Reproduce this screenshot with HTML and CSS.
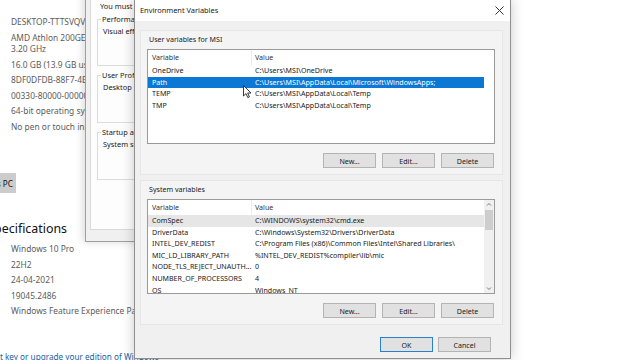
FILE: index.html
```html
<!DOCTYPE html>
<html lang="en">
<head>
  <meta charset="UTF-8">
  <title>Environment Variables</title>
  <link rel="stylesheet" href="styles.css">
</head>
<body>
  <div class="settings">
    <ul class="info">
      <li>DESKTOP-TTTSVQV</li>
      <li>AMD Athlon 200GE with Radeon Vega Graphics<br>3.20 GHz</li>
      <li>16.0 GB (13.9 GB usable)</li>
      <li>8DF0DFDB-88F7-4E2A-9C41-7A1B3E5D0F62</li>
      <li>00330-80000-00000-AA907</li>
      <li>64-bit operating system, x64-based processor</li>
      <li>No pen or touch input is available for this display</li>
    </ul>
    <div class="cut-right rename-wrap">
      <button class="rename-btn">Rename this PC</button>
    </div>
    <div class="cut-right heading-wrap">
      <h2 class="spec-heading">Windows specifications</h2>
    </div>
    <ul class="info specs">
      <li>Windows 10 Pro</li>
      <li>22H2</li>
      <li>24-04-2021</li>
      <li>19045.2486</li>
      <li>Windows Feature Experience Pack 120.2212.4190.0</li>
    </ul>
    <a class="upgrade-link" href="#">Change product key or upgrade your edition of Windows</a>
  </div>

  <div class="sysprops">
    <div class="sys-page">
      <div class="sys-line">You must be logged on as an Administrator to make most of these changes.</div>
      <fieldset class="sys-group">
        <legend>Performance</legend>
        <div class="sys-line">Visual effects, processor scheduling, memory usage, and virtual memory</div>
      </fieldset>
      <fieldset class="sys-group">
        <legend>User Profiles</legend>
        <div class="sys-line">Desktop settings related to your sign-in</div>
      </fieldset>
      <fieldset class="sys-group">
        <legend>Startup and Recovery</legend>
        <div class="sys-line">System startup, system failure, and debugging information</div>
      </fieldset>
    </div>
  </div>

  <div class="env">
    <div class="titlebar">
      <span>Environment Variables</span>
      <svg class="close" width="9" height="9" viewBox="0 0 9 9"><path d="M0.5 0.5 L8.5 8.5 M8.5 0.5 L0.5 8.5" stroke="#333" stroke-width="1"/></svg>
    </div>

    <div class="panel user-panel">
      <div class="panel-label">User variables for MSI</div>
      <div class="list">
        <div class="rows">
          <div class="row head"><span>Variable</span><span>Value</span></div>
          <div class="row"><span>OneDrive</span><span>C:\Users\MSI\OneDrive</span></div>
          <div class="row selected"><span>Path</span><span>C:\Users\MSI\AppData\Local\Microsoft\WindowsApps;</span></div>
          <div class="row"><span>TEMP</span><span>C:\Users\MSI\AppData\Local\Temp</span></div>
          <div class="row"><span>TMP</span><span>C:\Users\MSI\AppData\Local\Temp</span></div>
        </div>
      </div>
      <div class="btn-row">
        <button class="btn">New...</button>
        <button class="btn">Edit...</button>
        <button class="btn">Delete</button>
      </div>
    </div>

    <div class="panel sys-panel">
      <div class="panel-label">System variables</div>
      <div class="list">
        <div class="rows">
          <div class="row head"><span>Variable</span><span>Value</span></div>
          <div class="row inactive"><span>ComSpec</span><span>C:\WINDOWS\system32\cmd.exe</span></div>
          <div class="row"><span>DriverData</span><span>C:\Windows\System32\Drivers\DriverData</span></div>
          <div class="row"><span>INTEL_DEV_REDIST</span><span>C:\Program Files (x86)\Common Files\Intel\Shared Libraries\</span></div>
          <div class="row"><span>MIC_LD_LIBRARY_PATH</span><span>%INTEL_DEV_REDIST%compiler\lib\mic</span></div>
          <div class="row"><span>NODE_TLS_REJECT_UNAUTH...</span><span>0</span></div>
          <div class="row"><span>NUMBER_OF_PROCESSORS</span><span>4</span></div>
          <div class="row"><span>OS</span><span>Windows_NT</span></div>
        </div>
        <div class="scrollbar">
          <svg class="arrow" width="10" height="9" viewBox="0 0 10 9"><path d="M3 5.5 L5 3.5 L7 5.5" fill="none" stroke="#777" stroke-width="1"/></svg>
          <div class="thumb"></div>
          <div class="track"></div>
          <svg class="arrow" width="10" height="9" viewBox="0 0 10 9"><path d="M3 3.5 L5 5.5 L7 3.5" fill="none" stroke="#777" stroke-width="1"/></svg>
        </div>
      </div>
      <div class="btn-row">
        <button class="btn">New...</button>
        <button class="btn">Edit...</button>
        <button class="btn">Delete</button>
      </div>
    </div>

    <div class="footer">
      <button class="btn default">OK</button>
      <button class="btn">Cancel</button>
    </div>
  </div>

  <svg class="cursor" width="10" height="14" viewBox="0 0 10 14">
    <path d="M0.5 0.5 L0.5 11 L3 8.6 L4.8 12.6 L6.4 11.9 L4.7 8 L8 8 Z" fill="#fff" stroke="#222" stroke-width="0.9" stroke-linejoin="round"/>
  </svg>
</body>
</html>
```
FILE: styles.css
```css
* {
  box-sizing: border-box;
}

body {
  margin: 0;
  width: 640px;
  height: 360px;
  overflow: hidden;
  position: relative;
  background-color: #fff;
  font-family: "Noto Sans", "Open Sans", sans-serif;
}

/* background settings page */
.settings {
  padding: 16px 0 0 11px;
  color: #5c5c5c;
  font-size: 8.4px;
  white-space: nowrap;
}

.info {
  list-style: none;
  margin: 0;
  padding: 0;
}

.info li {
  line-height: 11.5px;
  margin-bottom: 4px;
}

.cut-right {
  display: flex;
  justify-content: flex-end;
  margin-left: -11px;
}

.rename-wrap {
  width: 16px;
  margin-top: 41px;
}

.rename-btn {
  flex-shrink: 0;
  height: 20px;
  padding: 0 3px 0 8px;
  border: none;
  background-color: #cccccc;
  color: #111;
  font-family: inherit;
  font-size: 8.2px;
}

.heading-wrap {
  width: 67px;
  margin-top: 27px;
}

.spec-heading {
  flex-shrink: 0;
  margin: 0;
  font-size: 12.4px;
  font-weight: 400;
  line-height: 18px;
  color: #111;
}

.specs {
  margin-top: 5px;
}

.upgrade-link {
  display: block;
  margin: 34px 0 0 -70px;
  color: #1a5fa6;
  font-size: 8.2px;
}

/* system properties dialog, behind */
.sysprops {
  position: absolute;
  left: 85px;
  top: -30px;
  width: 90px;
  height: 272px;
  padding: 19px 0 11px 4px;
  background-color: #f0f0f0;
  border: 1px solid #a0a0a0;
  box-shadow: -2px 0 8px rgba(0, 0, 0, 0.15);
  font-size: 7.4px;
  color: #1a1a1a;
  white-space: nowrap;
}

.sys-page {
  height: 100%;
  padding: 10px 0 0 6px;
  background-color: #fdfdfd;
  border: 1px solid #d9d9d9;
}

.sys-line {
  line-height: 10px;
  padding-left: 3px;
}

.sys-group {
  margin: 3px 0 0 0;
  padding: 2px 0 0 2px;
  height: 52px;
  border: 1px solid #dcdcdc;
}

.sys-group legend {
  padding: 0 1px;
  margin-left: 1px;
  line-height: 10px;
}

.sys-group + .sys-group {
  margin-top: 4px;
  height: 53px;
}

/* environment variables dialog */
.env {
  position: absolute;
  left: 134px;
  top: -1px;
  width: 377px;
  height: 360px;
  background-color: #f0f0f0;
  border: 1px solid #8f8f8f;
  box-shadow: 0 0 12px rgba(0, 0, 0, 0.22);
  font-size: 7.1px;
  color: #1a1a1a;
}

.titlebar {
  height: 21px;
  display: flex;
  align-items: center;
  justify-content: space-between;
  padding: 0 6px 1px 5px;
  background-color: #fff;
  color: #222;
  font-size: 7.4px;
}

.panel {
  margin: 9px 7px 0 5px;
  padding: 3px 8px 6px 6px;
  background-color: #f4f4f4;
  border: 1px solid #e6e6e6;
}

.sys-panel {
  margin-top: 5px;
  padding-top: 3px;
  padding-bottom: 6px;
}

.panel-label {
  line-height: 10px;
  margin-bottom: 5px;
  padding-left: 2px;
}

.list {
  display: flex;
  width: 348px;
  height: 95px;
  background-color: #fff;
  border: 1px solid #9a9a9a;
  overflow: hidden;
}

.rows {
  width: 336px;
}

.row {
  display: grid;
  grid-template-columns: 104px 232px;
  height: 11.6px;
  line-height: 11.6px;
  white-space: nowrap;
}

.row span {
  overflow: hidden;
  padding-left: 4px;
}

.row span + span {
  padding-left: 3px;
}

.row.head {
  height: 15px;
  line-height: 15px;
  color: #333;
}

.row.head span:first-child {
  border-right: 1px solid #ececec;
}

.row.selected {
  background-color: #0a78d4;
  color: #fff;
}

.row.inactive {
  background-color: #e6e6e6;
}

.scrollbar {
  display: flex;
  flex-direction: column;
  width: 10px;
  margin-left: auto;
  background-color: #f0f0f0;
}

.thumb {
  height: 20px;
  margin: 1px 1px 0 1px;
  background-color: #cdcdcd;
}

.track {
  flex: 1;
}

.btn-row {
  display: flex;
  justify-content: flex-end;
  gap: 6px;
  margin-top: 9px;
}

.btn {
  width: 53px;
  height: 15px;
  padding: 0;
  background-color: #e1e1e1;
  border: 1px solid #b4b4b4;
  font-family: inherit;
  font-size: 7.1px;
  color: #1a1a1a;
}

.btn.default {
  border-color: #2a7fd0;
}

.footer {
  display: flex;
  justify-content: flex-end;
  gap: 5px;
  margin: 12px 19px 0 0;
}

.cursor {
  position: absolute;
  left: 243px;
  top: 85px;
}
```
